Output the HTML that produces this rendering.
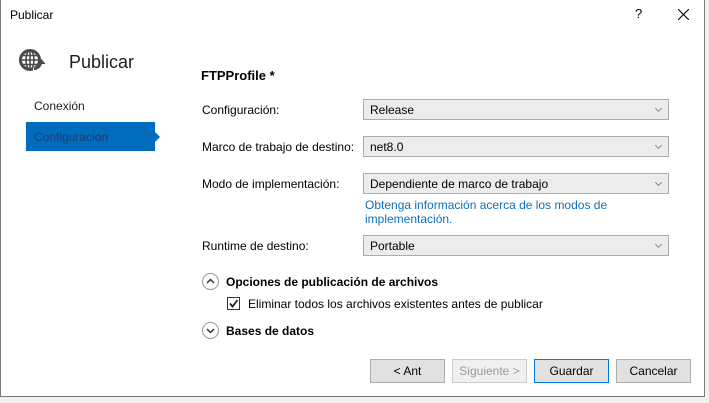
<!DOCTYPE html>
<html><head><meta charset="utf-8"><style>
*{box-sizing:border-box;margin:0;padding:0}
body{width:709px;height:403px;background:#f0f0f0;font-family:"Liberation Sans",sans-serif;font-size:12px;color:#000;position:relative;overflow:hidden}
.win{position:absolute;left:0;top:0;width:705px;height:397px;background:#fff;border-left:1px solid #7a7a7a;border-right:1px solid #7a7a7a;border-bottom:1px solid #7a7a7a}
.a{position:absolute;white-space:nowrap}
.dd{position:absolute;left:362px;width:306px;height:21px;background:#ececec;border:1px solid #acacac;padding:3px 0 0 6px}
.dd:after{content:"";position:absolute;right:7px;top:6px;width:4px;height:4px;border-right:1px solid #888;border-bottom:1px solid #888;transform:rotate(45deg)}
.btn{position:absolute;top:359px;width:75px;height:24px;background:#e1e1e1;border:1px solid #adadad;text-align:center;line-height:22px}
.circ{position:absolute;left:201px;width:17px;height:17px;border:1px solid #999;border-radius:50%}
</style></head><body>
<div class="win">
<div class="a" style="left:9px;top:8px">Publicar</div>
<div class="a" style="left:634px;top:6px;font-size:13px">?</div>
<svg class="a" style="left:677px;top:9px" width="11" height="11"><path d="M0 0L11 11M11 0L0 11" stroke="#000" stroke-width="1.1"/></svg>
<svg class="a" style="left:17px;top:46px" width="30" height="30" viewBox="0 0 30 30">
<circle cx="12" cy="14" r="9.5" fill="none" stroke="#4a4a4a" stroke-width="3"/>
<path d="M12 5v18M3 14h18M5 9.5h14M5 18.5h14" stroke="#4a4a4a" stroke-width="1.6"/>
<ellipse cx="12" cy="14" rx="4" ry="9.5" fill="none" stroke="#4a4a4a" stroke-width="1.6"/>
<path d="M15 24a10 10 0 0 0 10-9" fill="none" stroke="#fff" stroke-width="5"/>
<path d="M16 23a8 8 0 0 0 7-6" fill="none" stroke="#4a4a4a" stroke-width="2.5"/>
<path d="M19.5 18l4-5 4 5z" fill="#4a4a4a"/>
</svg>
<div class="a" style="left:68px;top:52px;font-size:18px;color:#1e1e1e">Publicar</div>
<div class="a" style="left:33px;top:99px;color:#1e1e1e">Conexión</div>
<div class="a" style="left:25px;top:122px;width:129px;height:29px;background:#006cbe;color:#1c3b6e;padding:8px 0 0 8px">Configuración</div>
<div class="a" style="left:154px;top:132px;width:0;height:0;border-left:5px solid #006cbe;border-top:5px solid transparent;border-bottom:5px solid transparent"></div>
<div class="a" style="left:200px;top:68px;font-weight:bold;font-size:13px">FTPProfile *</div>
<div class="a" style="left:201px;top:103px">Configuración:</div>
<div class="dd" style="top:99px">Release</div>
<div class="a" style="left:201px;top:140px">Marco de trabajo de destino:</div>
<div class="dd" style="top:136px">net8.0</div>
<div class="a" style="left:201px;top:177px">Modo de implementación:</div>
<div class="dd" style="top:173px">Dependiente de marco de trabajo</div>
<div class="a" style="left:364px;top:198px;color:#0e70c0;line-height:14px">Obtenga información acerca de los modos de<br>implementación.</div>
<div class="a" style="left:201px;top:239px">Runtime de destino:</div>
<div class="dd" style="top:235px">Portable</div>
<div class="circ" style="top:273px"></div>
<svg class="a" style="left:205px;top:278px" width="9" height="6"><path d="M1 5l3.5-3.5L8 5" fill="none" stroke="#333" stroke-width="1.5"/></svg>
<div class="a" style="left:225px;top:275px;font-weight:bold">Opciones de publicación de archivos</div>
<div class="a" style="left:226px;top:297px;width:13px;height:13px;border:1px solid #333;background:#fff"></div>
<svg class="a" style="left:227px;top:298px" width="11" height="11"><path d="M2 5.5l2.5 3L9.5 2" fill="none" stroke="#222" stroke-width="1.8"/></svg>
<div class="a" style="left:247px;top:297px">Eliminar todos los archivos existentes antes de publicar</div>
<div class="circ" style="top:322px"></div>
<svg class="a" style="left:205px;top:328px" width="9" height="6"><path d="M1 1l3.5 3.5L8 1" fill="none" stroke="#333" stroke-width="1.5"/></svg>
<div class="a" style="left:225px;top:324px;font-weight:bold">Bases de datos</div>
<div class="btn" style="left:369px">&lt; Ant</div>
<div class="btn" style="left:451px;background:#f0f0f0;border-color:#ccc;color:#999">Siguiente &gt;</div>
<div class="btn" style="left:533px;border-color:#0078d7">Guardar</div>
<div class="btn" style="left:615px">Cancelar</div>
</div>
</body></html>
